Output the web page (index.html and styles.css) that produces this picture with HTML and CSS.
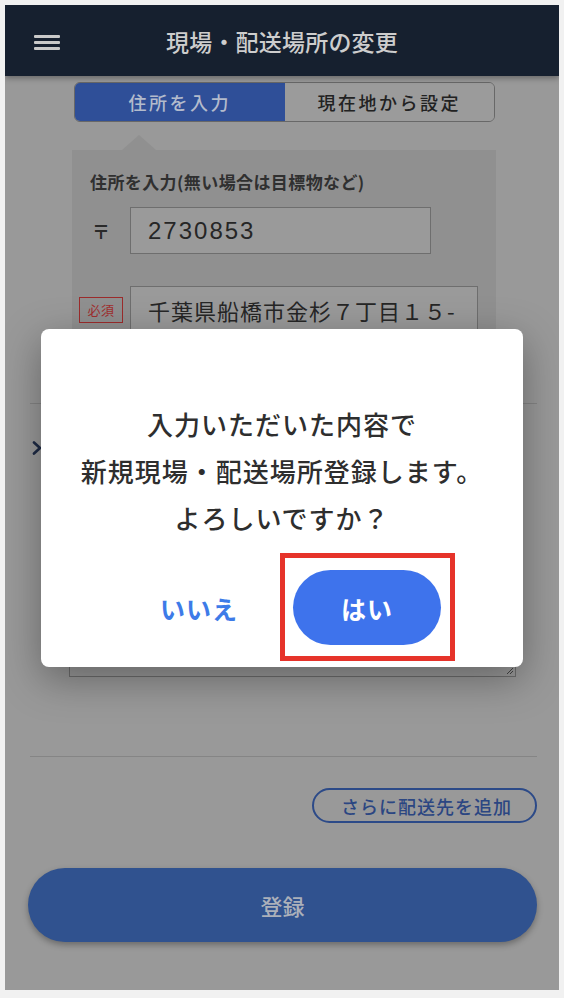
FILE: index.html
```html
<!DOCTYPE html>
<html lang="ja">
<head>
<meta charset="utf-8">
<title>現場・配送場所の変更</title>
<link rel="stylesheet" href="styles.css">
</head>
<body>
<div class="phone">
  <header class="topbar">
    <div class="menu" aria-label="menu"><span></span><span></span><span></span></div>
    <h1 class="title">現場・配送場所の変更</h1>
    <div></div>
  </header>
  <main class="content">
    <div class="tabs">
      <div class="tab active">住所を入力</div>
      <div class="tab">現在地から設定</div>
    </div>
    <div class="pointer"></div>
    <section class="panel">
      <p class="label">住所を入力(無い場合は目標物など)</p>
      <div class="row">
        <span class="zip">〒</span>
        <div class="field zipfield">2730853</div>
      </div>
      <div class="row row2">
        <span class="req">必須</span>
        <div class="field addr">千葉県船橋市金杉７丁目１５-</div>
      </div>
    </section>
    <div class="rule"></div>
    <div class="extra">
      <svg class="chev" width="10" height="14" viewBox="0 0 10 14"><path d="M2 1.5 L8 7 L2 12.5" fill="none" stroke="#1d2a45" stroke-width="2.6" stroke-linecap="round" stroke-linejoin="round"/></svg>
      <span class="extra-label">備考</span>
    </div>
    <div class="textarea">
      <svg class="grip" width="8" height="8" viewBox="0 0 8 8"><path d="M1 7 L7 1 M4 7 L7 4" stroke="#444" stroke-width="1"/></svg>
    </div>
    <div class="rule rule2"></div>
    <div class="addrow"><div class="add">さらに配送先を追加</div></div>
    <div class="submit">登録</div>
  </main>
  <div class="modal" role="dialog">
    <p class="msg">入力いただいた内容で<br>新規現場・配送場所登録します。<br>よろしいですか？</p>
    <div class="actions">
      <div class="btn no">いいえ</div>
      <div class="yeswrap">
        <div class="btn yes">はい</div>
        <div class="highlight"></div>
      </div>
    </div>
  </div>
</div>
</body>
</html>
```
FILE: styles.css
```css
* { box-sizing: border-box; }
html, body { margin: 0; padding: 0; }
body {
  background: #f1f1f1;
  padding: 5px;
  font-family: "Noto Sans CJK JP", "Noto Sans", sans-serif;
  color: #222;
}
.phone {
  position: relative;
  width: 554px;
  height: 985px;
  background: #999999;
  overflow: hidden;
}
.topbar {
  height: 71px;
  background: #16202f;
  display: grid;
  grid-template-columns: 1fr auto 1fr;
  align-items: center;
  padding-top: 1px;
  box-shadow: 0 2px 6px rgba(0,0,0,0.35);
  position: relative;
  z-index: 1;
}
.menu {
  display: flex;
  flex-direction: column;
  gap: 3px;
  padding-left: 29px;
  padding-top: 2px;
}
.menu span {
  display: block;
  width: 26px;
  height: 3px;
  background: #c9c9c9;
  border-radius: 1px;
}
.title {
  margin: 0;
  font-size: 23px;
  font-weight: 500;
  color: #cdcdcd;
  line-height: 1;
  letter-spacing: 0.2px;
}
.content {
  padding: 6px 22px 0 23px;
  display: flex;
  flex-direction: column;
}
.tabs {
  display: flex;
  width: 421px;
  height: 40px;
  margin-left: 46px;
  border: 1px solid #686868;
  border-radius: 6px;
  overflow: hidden;
}
.tab {
  flex: 1;
  display: flex;
  align-items: center;
  justify-content: center;
  font-size: 18px;
  font-weight: 500;
  letter-spacing: 2.5px;
  color: #222;
  background: #9b9b9b;
}
.tab.active {
  background: #2f4f98;
  color: #b3bbcc;
}
.pointer {
  width: 0;
  height: 0;
  margin-top: 13px;
  margin-left: 94px;
  border-left: 17px solid transparent;
  border-right: 17px solid transparent;
  border-bottom: 15px solid #909090;
}
.panel {
  width: 424px;
  margin-left: 44px;
  background: #909090;
  padding: 20px 0 47px 18px;
}
.label {
  margin: 0;
  font-size: 17px;
  font-weight: 700;
  line-height: 24px;
  letter-spacing: 0.4px;
  color: #303030;
}
.row {
  display: flex;
  align-items: center;
  margin-top: 13px;
}
.row2 { margin-top: 32px; }
.zip {
  width: 40px;
  font-size: 18px;
  font-weight: 700;
  color: #2a2a2a;
  padding-left: 2px;
}
.req {
  width: 44px;
  height: 26px;
  margin-left: -11px;
  margin-right: 7px;
  border: 1.5px solid #9c2c2c;
  color: #a02e2e;
  font-size: 13px;
  display: flex;
  align-items: center;
  justify-content: center;
  letter-spacing: 0.5px;
}
.field {
  height: 47px;
  border: 1.5px solid #6e6e6e;
  background: #9a9a9a;
  display: flex;
  align-items: center;
  padding-left: 17px;
  color: #262626;
  white-space: nowrap;
  overflow: hidden;
}
.zipfield {
  width: 301px;
  font-family: "Liberation Sans", sans-serif;
  font-size: 24px;
  letter-spacing: 2px;
}
.addr {
  width: 348px;
  font-size: 22px;
  letter-spacing: 1px;
}
.rule {
  height: 1px;
  background: #858585;
  margin-top: 23px;
  margin-left: 2px;
}
.extra {
  display: flex;
  align-items: center;
  gap: 10px;
  margin-top: 37px;
  margin-left: 4px;
  height: 14px;
}
.extra-label { font-size: 16px; font-weight: 700; color: #303030; }
.textarea {
  position: relative;
  height: 180px;
  margin-top: 42px;
  margin-left: 41px;
  margin-right: 21px;
  border: 1.5px solid #6e6e6e;
  background: #9a9a9a;
}
.grip {
  position: absolute;
  right: 1px;
  bottom: 1px;
}
.rule2 { margin-top: 79px; }
.addrow {
  display: flex;
  justify-content: flex-end;
  margin-top: 31px;
}
.add {
  width: 225px;
  height: 35px;
  border: 2px solid #2c4a88;
  border-radius: 18px;
  display: flex;
  align-items: center;
  justify-content: center;
  font-size: 18px;
  font-weight: 500;
  letter-spacing: 1px;
  color: #2b4682;
  padding-left: 4px;
}
.submit {
  margin-top: 45px;
  height: 74px;
  border-radius: 37px;
  background: #30528f;
  display: flex;
  align-items: center;
  justify-content: center;
  color: #abb0ba;
  font-size: 22px;
  font-weight: 500;
  box-shadow: 0 3px 6px rgba(0,0,0,0.3);
}
.modal {
  position: absolute;
  left: 36px;
  top: 324px;
  width: 482px;
  height: 338px;
  background: #ffffff;
  border-radius: 8px;
  box-shadow: 0 12px 40px rgba(0,0,0,0.35);
  padding-top: 71px;
  display: flex;
  flex-direction: column;
  align-items: center;
}
.msg {
  margin: 0;
  text-align: center;
  font-size: 26px;
  line-height: 47px;
  font-weight: 500;
  letter-spacing: 1px;
  color: #2e2e2e;
}
.actions {
  display: flex;
  gap: 20px;
  margin-top: 29px;
  margin-left: 2px;
}
.btn {
  width: 148px;
  height: 75px;
  border-radius: 38px;
  display: flex;
  align-items: center;
  justify-content: center;
  font-size: 25px;
  font-weight: 700;
  letter-spacing: 1px;
}
.no { color: #3d7be8; }
.yeswrap { position: relative; }
.yes {
  background: #3e73ec;
  color: #ffffff;
}
.highlight {
  position: absolute;
  top: -17px;
  left: -13px;
  right: -14px;
  bottom: -16px;
  border: 5px solid #e6332a;
  pointer-events: none;
}
```
